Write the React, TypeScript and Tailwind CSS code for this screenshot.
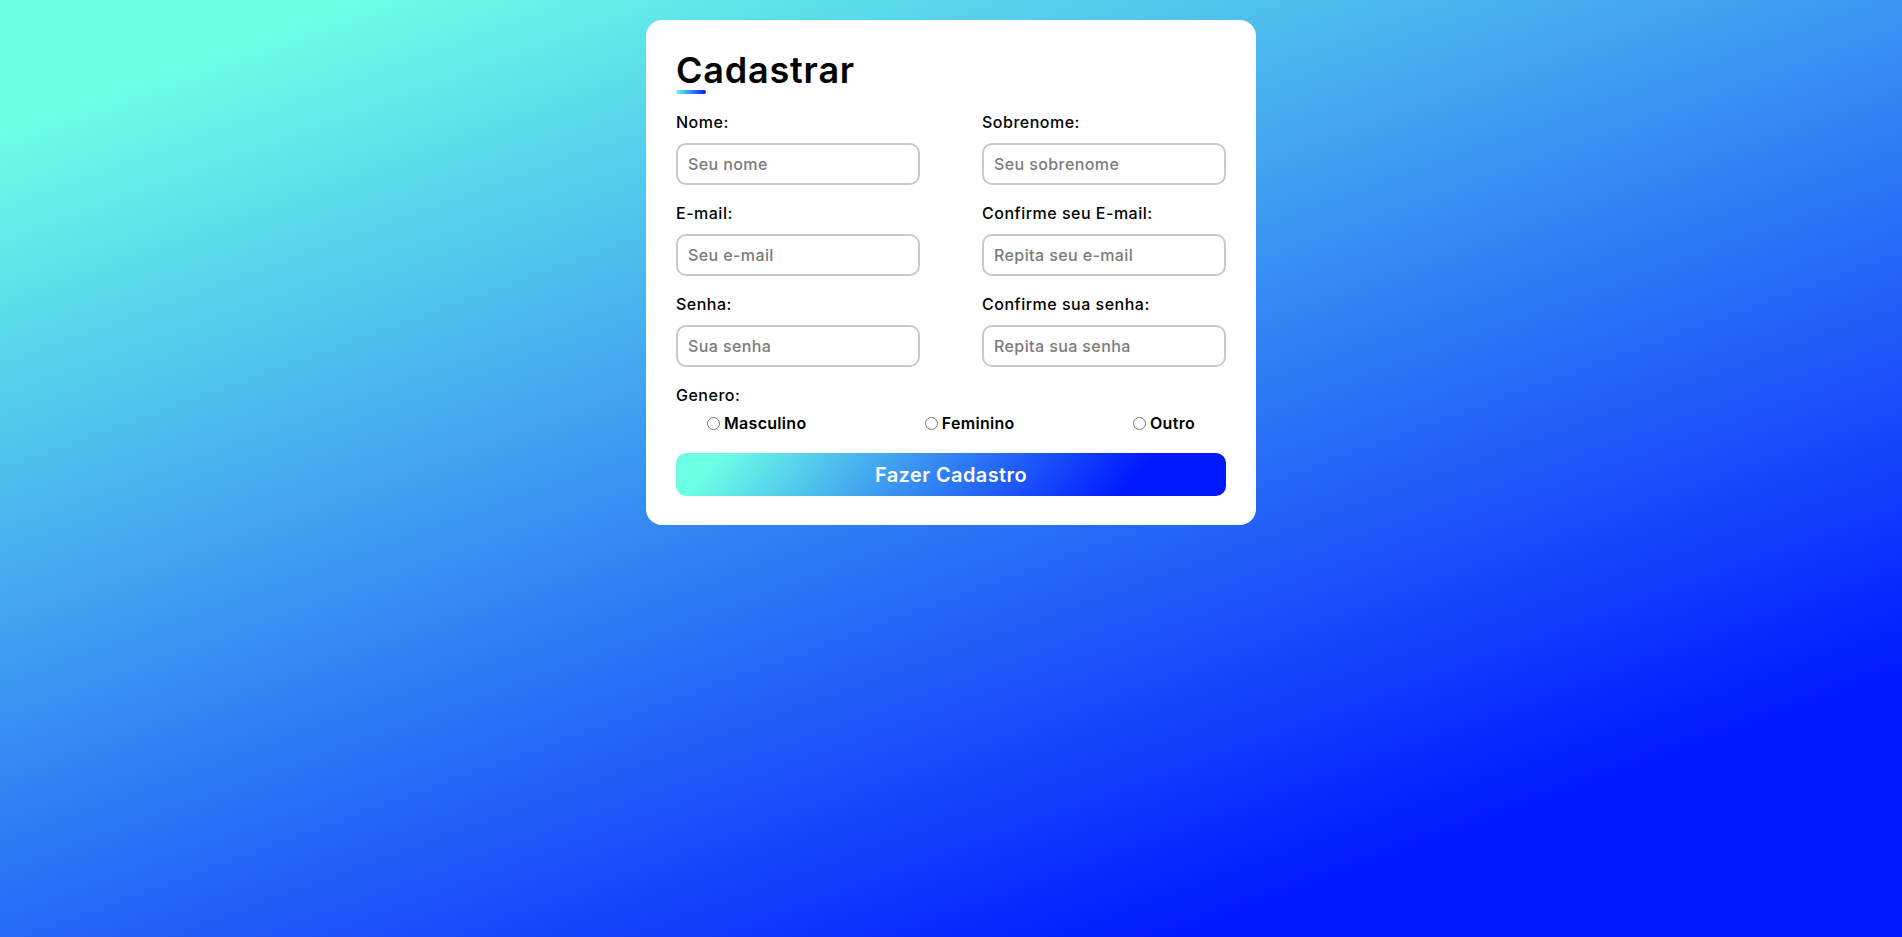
const fields = [
  { id: "nome", label: "Nome:", placeholder: "Seu nome", type: "text" },
  { id: "sobrenome", label: "Sobrenome:", placeholder: "Seu sobrenome", type: "text" },
  { id: "email", label: "E-mail:", placeholder: "Seu e-mail", type: "email" },
  { id: "confirmEmail", label: "Confirme seu E-mail:", placeholder: "Repita seu e-mail", type: "email" },
  { id: "senha", label: "Senha:", placeholder: "Sua senha", type: "password" },
  { id: "confirmSenha", label: "Confirme sua senha:", placeholder: "Repita sua senha", type: "password" },
];

const generos = ["Masculino", "Feminino", "Outro"];

export default function App() {
  return (
    <div className="min-h-screen w-full flex justify-center pt-[20px] bg-[linear-gradient(160deg,#6bffe6_8%,#0019ff_84%)] font-[Inter,sans-serif]">
      <form
        className="w-[610px] h-fit bg-white rounded-[16px] px-[30px] pt-[32px] pb-[29px]"
        onSubmit={(e) => e.preventDefault()}
      >
        <h1 className="text-[36px] leading-[36px] font-semibold text-black tracking-[0.8px]">
          Cadastrar
        </h1>
        <div className="mt-[2px] w-[30px] h-[4px] rounded-full bg-[linear-gradient(to_right,#6bffe6,#0019ff)]" />

        <div className="mt-[18px] grid grid-cols-2 gap-x-[62px] gap-y-[18px]">
          {fields.map((f) => (
            <div key={f.id} className="flex flex-col gap-[11px]">
              <label
                htmlFor={f.id}
                className="text-[16px] leading-[20px] font-medium text-black tracking-[0.5px]"
              >
                {f.label}
              </label>
              <input
                id={f.id}
                type={f.type}
                placeholder={f.placeholder}
                className="h-[42px] w-full border-2 border-[#c9c9c9] rounded-[10px] px-[10px] text-[16px] font-medium tracking-[0.4px] text-black placeholder:text-[#7b7b7b] outline-none"
              />
            </div>
          ))}
        </div>

        <div className="mt-[18px]">
          <p className="text-[16px] leading-[20px] font-medium text-black tracking-[0.5px]">
            Genero:
          </p>
          <div className="mt-[8px] flex justify-between px-[31px]">
            {generos.map((g) => (
              <label key={g} className="flex items-center gap-[4px] text-[16px] leading-[20px] font-semibold text-black tracking-[0.3px]">
                <input type="radio" name="genero" value={g} className="w-[13px] h-[13px]" />
                {g}
              </label>
            ))}
          </div>
        </div>

        <button
          type="submit"
          className="mt-[20px] w-full h-[43px] rounded-[10px] bg-[linear-gradient(130deg,#6bffe6_8%,#0019ff_82%)] text-white text-[20px] font-semibold tracking-[0.4px]"
        >
          Fazer Cadastro
        </button>
      </form>
    </div>
  );
}
